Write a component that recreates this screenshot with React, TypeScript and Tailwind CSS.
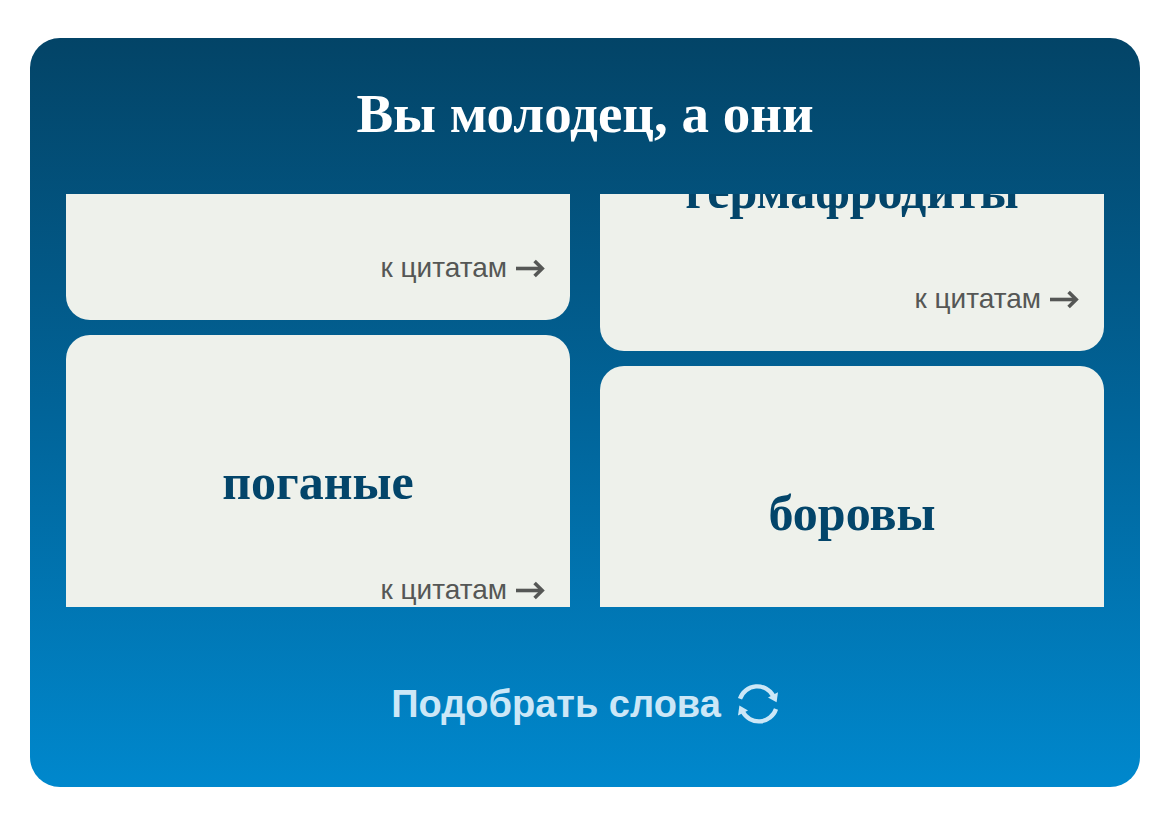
type Reel = {
  id: string
  offset: number
  words: string[]
}

// offset is how far the reel has been scrolled up, in px
const reels: Reel[] = [
  { id: 'adjective', offset: 181, words: ['', 'поганые'] },
  { id: 'noun', offset: 150, words: ['гермафродиты', 'боровы'] },
]

function ArrowIcon() {
  return (
    <svg
      viewBox="0 0 30 20"
      className="h-5 w-[30px]"
      fill="none"
      stroke="currentColor"
      strokeWidth="3.6"
      aria-hidden="true"
    >
      <path d="M1 10.5h26" />
      <path d="M19.6 3 27.2 10.5 19.6 18" />
    </svg>
  )
}

function RefreshIcon() {
  return (
    <svg viewBox="0 0 42 42" className="size-[42px]" aria-hidden="true">
      <g fill="none" stroke="currentColor" strokeWidth="4.3">
        <path d="M3 15.8A18.2 18.2 0 0 1 36.4 13.2" />
        <path d="M39 26A18.2 18.2 0 0 1 5.6 28.6" />
      </g>
      <g fill="currentColor">
        <path d="M41 9.2 39.6 19.3 31 14.4Z" />
        <path d="M1 32.6 2.4 22.5 11 27.4Z" />
      </g>
    </svg>
  )
}

function WordCard({ word }: { word: string }) {
  return (
    <article className="flex h-[307px] shrink-0 flex-col justify-end rounded-3xl bg-[#eef1eb] pb-8">
      <h2 className="h-[60px] text-center font-['Liberation_Serif',serif] text-[50px] leading-[60px] font-bold text-[#03456a]">
        {word}
      </h2>
      <a
        href="#quotes"
        className="mt-[58px] mr-[25px] flex items-center gap-2 self-end text-[28px] leading-10 text-[#555755]"
      >
        к цитатам
        <ArrowIcon />
      </a>
    </article>
  )
}

function WordReel({ reel }: { reel: Reel }) {
  return (
    <div className="h-[413px] overflow-hidden">
      <div className="flex flex-col gap-[15px]" style={{ marginTop: -reel.offset }}>
        {reel.words.map((word, i) => (
          <WordCard key={i} word={word} />
        ))}
      </div>
    </div>
  )
}

export default function App() {
  return (
    <main className="bg-white px-[30px] pt-[38px] pb-[26px] font-['Liberation_Sans',sans-serif]">
      <section className="rounded-[30px] bg-linear-to-b from-[#034467] via-[#016499] to-[#0088cd] px-9">
        <h1 className="pt-[46px] pb-[50px] text-center font-['Liberation_Serif',serif] text-[55px] leading-[60px] font-bold text-white">
          Вы молодец, а они
        </h1>
        <div className="grid grid-cols-2 gap-[30px]">
          {reels.map((reel) => (
            <WordReel key={reel.id} reel={reel} />
          ))}
        </div>
        <div className="flex justify-center pt-[73px] pb-[59px]">
          <button
            type="button"
            className="flex h-12 cursor-pointer items-center gap-4 text-[38px] leading-[48px] font-bold text-[#cce7f7]"
          >
            Подобрать слова
            <RefreshIcon />
          </button>
        </div>
      </section>
    </main>
  )
}
